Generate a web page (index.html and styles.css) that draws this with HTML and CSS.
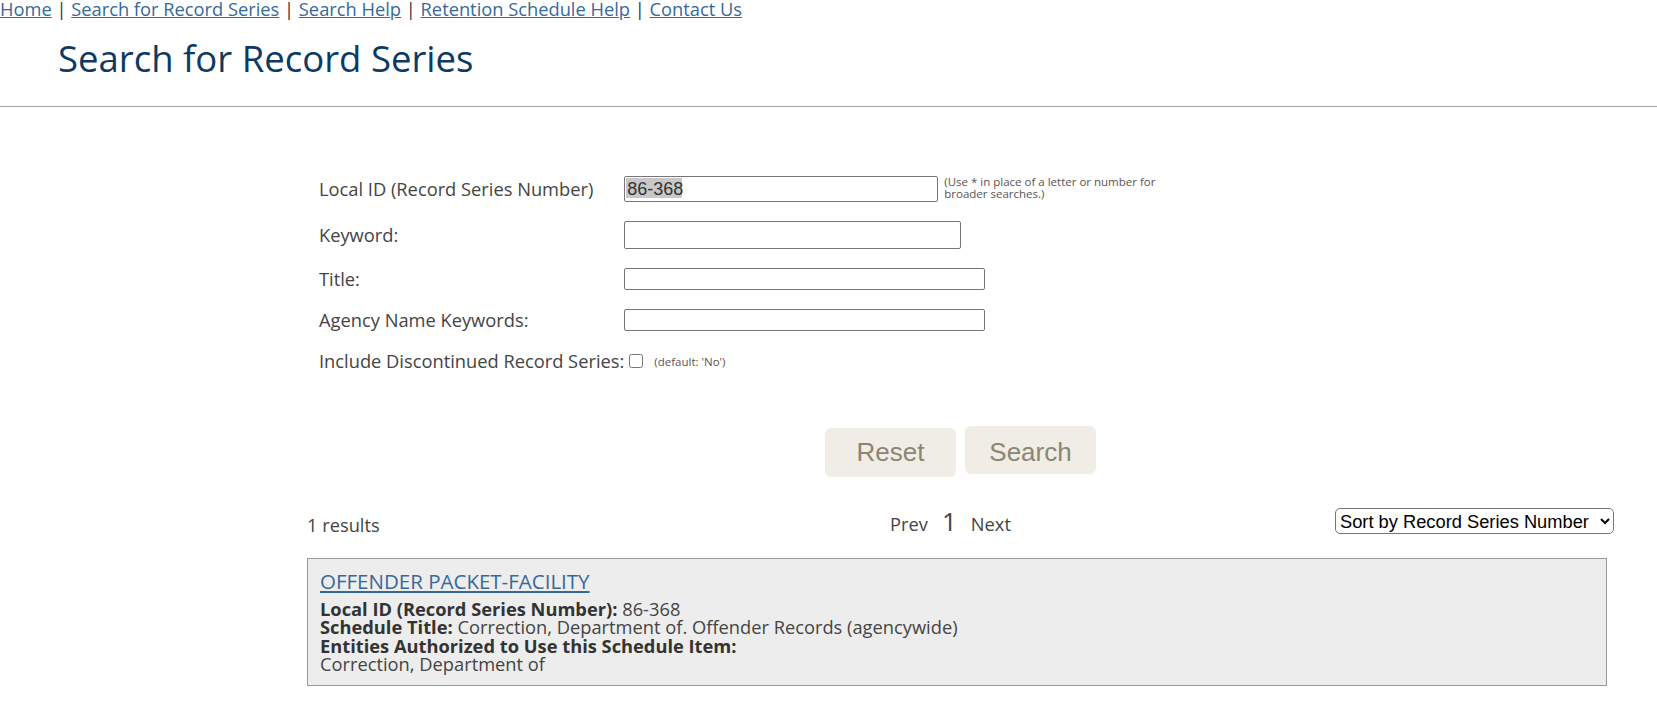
FILE: index.html
```html
<!DOCTYPE html>
<html lang="en">
<head>
    <meta charset="UTF-8">
    <meta name="viewport" content="width=device-width, initial-scale=1.0">
    <title>Search for Record Series</title>
    <link rel="stylesheet" href="styles.css">
</head>
<body>
    <header class="site-header">
        <nav class="top-nav">
            <a href="#">Home</a> | <a href="#">Search for Record Series</a> | <a href="#">Search Help</a> | <a href="#">Retention Schedule Help</a> | <a href="#">Contact Us</a>
        </nav>
        <h1 class="page-title">Search for Record Series</h1>
    </header>

    <main class="content">
        <form class="search-form" onsubmit="return false;">
            <div class="form-grid">
                <label for="localId">Local ID (Record Series Number)</label>
                <div class="field">
                    <input type="text" id="localId" class="input-id" value="86-368">
                    <span class="hint">(Use * in place of a letter or number for<br>broader searches.)</span>
                </div>

                <label for="keyword">Keyword:</label>
                <div class="field">
                    <input type="text" id="keyword" class="input-keyword">
                </div>

                <label for="title">Title:</label>
                <div class="field">
                    <input type="text" id="title" class="input-wide">
                </div>

                <label for="agency">Agency Name Keywords:</label>
                <div class="field">
                    <input type="text" id="agency" class="input-wide">
                </div>

                <label for="discontinued">Include Discontinued Record Series:</label>
                <div class="field field-check">
                    <input type="checkbox" id="discontinued" class="check">
                    <span class="note">(default: 'No')</span>
                </div>
            </div>

            <div class="buttons">
                <input type="reset" class="btn btn-reset" value="Reset">
                <button type="submit" class="btn btn-search">Search</button>
            </div>
        </form>

        <div class="results-bar">
            <div class="result-count">1 results</div>
            <div class="pager">
                <span>Prev</span>
                <span class="page-num">1</span>
                <span>Next</span>
            </div>
            <select class="sort-select">
                <option>Sort by Record Series Number</option>
                <option>Sort by Title</option>
            </select>
        </div>

        <div class="result-card">
            <a href="#" class="result-title">OFFENDER PACKET-FACILITY</a>
            <div class="result-details">
                <strong>Local ID (Record Series Number):</strong> 86-368<br>
                <strong>Schedule Title:</strong> Correction, Department of. Offender Records (agencywide)<br>
                <strong>Entities Authorized to Use this Schedule Item:</strong><br>
                Correction, Department of
            </div>
        </div>
    </main>
</body>
</html>
```

FILE: styles.css
```css
body {
    margin: 0;
    font-family: "Open Sans", "Liberation Sans", sans-serif;
    color: #444;
    background-color: #fff;
}
a {
    color: #36699a;
}

/* header */
.site-header {
    padding-bottom: 23px;
    border-bottom: 1px solid #a5a5a5;
}
.top-nav {
    font-size: 18.3px;
    line-height: 18px;
    color: #333;
}
.page-title {
    margin: 16px 0 0 58px;
    font-size: 36.5px;
    font-weight: 400;
    line-height: 49px;
    color: #0c3a62;
}

/* main area */
.content {
    margin-left: 307px;
    width: 1307px;
}
.search-form {
    padding-top: 69px;
}
.form-grid {
    display: grid;
    grid-template-columns: max-content 1fr;
    row-gap: 19px;
    align-items: center;
    padding-left: 12px;
}
.form-grid label {
    font-size: 18.3px;
    line-height: 22px;
}
.field {
    display: flex;
    align-items: flex-start;
}
.field-check {
    align-items: center;
}
.field input[type="text"] {
    box-sizing: border-box;
    font-family: "Liberation Sans", Arial, sans-serif;
    font-size: 18px;
    color: #333;
    padding: 1px 2px;
    margin: 0;
    border: 1px solid #767676;
    border-radius: 2px;
    background-color: #fff;
}
.field .input-id {
    width: 314px;
    height: 26px;
    border: 2px solid #5c5c5c;
    border-radius: 1px;
    background: linear-gradient(#c8c8c8, #c8c8c8) no-repeat 1px 1px / 56px 20px, #fff;
}
.field .input-keyword {
    width: 337px;
    height: 28px;
}
.field .input-wide {
    width: 361px;
    height: 22px;
}
.hint {
    margin-left: 6px;
    font-size: 11.5px;
    line-height: 11.5px;
    color: #555;
}
.check {
    width: 14px;
    height: 14px;
    margin: 0 0 0 5px;
}
.note {
    margin-left: 11px;
    font-size: 11.5px;
    color: #555;
}

/* buttons */
.buttons {
    display: flex;
    justify-content: center;
    align-items: flex-start;
    gap: 9px;
    margin-top: 54px;
}
.btn {
    width: 131px;
    margin: 0;
    padding: 0;
    border: 0;
    border-radius: 6px;
    background-color: #f0ede6;
    color: #8b8573;
    font-family: "Liberation Sans", Arial, sans-serif;
    font-size: 26px;
    cursor: pointer;
}
.btn-reset {
    height: 49px;
    margin-top: 2px;
}
.btn-search {
    height: 48px;
    padding-top: 4px;
}

/* results */
.results-bar {
    display: grid;
    grid-template-columns: 1fr auto 1fr;
    align-items: start;
    margin-top: 31px;
}
.result-count {
    padding-top: 4px;
    font-size: 18.3px;
}
.pager {
    display: flex;
    align-items: baseline;
    gap: 14px;
    margin-right: 20px;
    font-size: 18.3px;
}
.page-num {
    font-size: 26px;
    line-height: 1;
}
.sort-select {
    justify-self: end;
    width: 279px;
    height: 26px;
    font-family: "Liberation Sans", Arial, sans-serif;
    font-size: 18.3px;
    color: #000;
    background-color: #fff;
    border: 1px solid #767676;
    border-radius: 5px;
}
.result-card {
    box-sizing: border-box;
    width: 1300px;
    margin-top: 21px;
    padding: 8px 12px 12px 12px;
    border: 1px solid #999;
    background-color: #ededed;
}
.result-title {
    display: block;
    font-size: 20.5px;
    line-height: normal;
}
.result-details {
    margin-top: 5px;
    font-size: 18.3px;
    line-height: 18.3px;
    color: #444;
}
.result-details strong {
    color: #333;
}
```
